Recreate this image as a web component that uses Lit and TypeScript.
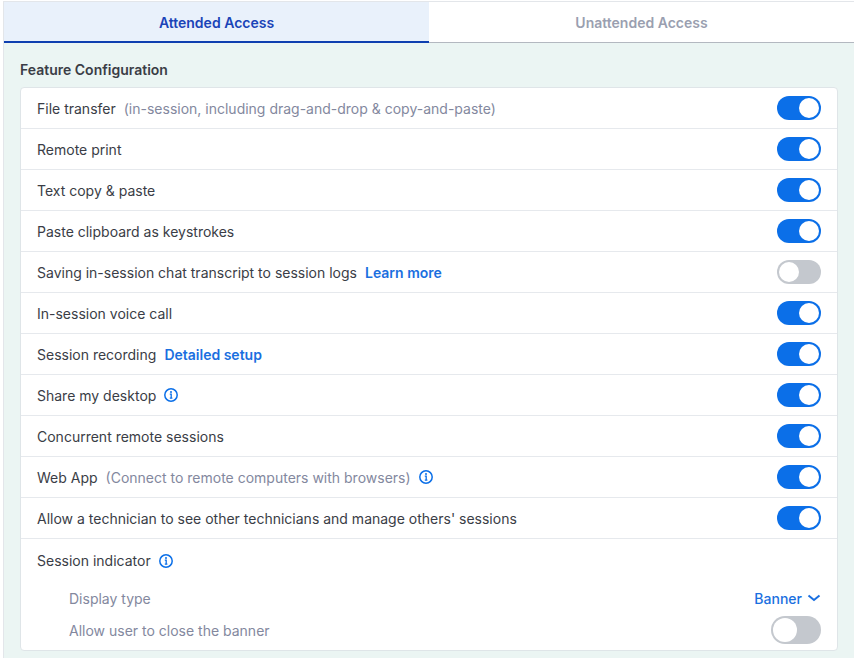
import { LitElement, html, css, svg } from "lit";
import { customElement } from "lit/decorators.js";

const info = html`<svg class="info" width="16" height="16" viewBox="0 0 16 16" fill="none">
  <circle cx="8" cy="8" r="6.2" stroke="#0b6fe8" stroke-width="1.5"/>
  <circle cx="8" cy="5" r="1" fill="#0b6fe8"/>
  <path d="M6.8 7.2H8.2V11M6.8 11.1H9.4" stroke="#0b6fe8" stroke-width="1.3"/>
</svg>`;

const toggle = (on: boolean, cls = "") => html`<span class="toggle ${on ? "on" : ""} ${cls}"><span class="knob"></span></span>`;

@customElement("app-root")
export class AppRoot extends LitElement {
  static styles = css`
    :host { display: block; height: 658px; overflow: hidden; background: #fff; padding: 1px 0 0 3px; box-sizing: border-box;
      font-family: Inter, "Liberation Sans", sans-serif; font-size: 14px; color: #3a3d46; }
    .frame { border-left: 1px solid #e3e6ea; border-top: 1px solid #e3e6ea; height: 100%; box-sizing: border-box; display: flex; flex-direction: column; background: #ebf5f3; }
    .tabs { display: flex; height: 41px; flex: none; }
    .tab { flex: 1; display: flex; align-items: center; justify-content: center; font-weight: 600; font-size: 14px; box-sizing: border-box; padding-top: 1px; }
    .tab.active { background: #e9f1fb; color: #1a44b8; border-bottom: 2px solid #0e3fb0; }
    .tab.inactive { background: #fff; color: #9a9fb0; border-bottom: 1px solid #b3b8c0; padding-top: 0; }
    .content { padding: 0 16px 0 16px; }
    h2 { margin: 0; font-size: 14px; font-weight: 600; color: #3a3d46; line-height: 17px; padding: 18px 0 9px; }
    .card { background: #fff; border: 1px solid #dfe5e8; border-radius: 4px; }
    .row { height: 41px; box-sizing: border-box; display: flex; align-items: center; padding: 0 16px; border-bottom: 1px solid #e6e9ed; }
    .row .spacer { flex: 1; }
    .hint { color: #83889e; margin-left: 8px; }
    a { color: #1a6fe0; font-weight: 600; margin-left: 8px; text-decoration: none; }
    .info { margin-left: 7px; flex: none; }
    .toggle { width: 44px; height: 24px; border-radius: 12px; background: #c4c8ce; position: relative; display: block; flex: none; }
    .toggle.on { background: #0b6fe8; }
    .knob { position: absolute; width: 20px; height: 20px; border-radius: 50%; background: #fff; top: 2px; left: 2px; }
    .toggle.on .knob { left: 22px; }
    .toggle.big { width: 50px; height: 28px; border-radius: 14px; }
    .toggle.big .knob { width: 24px; height: 24px; }
    .indicator { padding: 0 16px 11px; height: 111px; box-sizing: border-box; }
    .indicator .title { display: flex; align-items: center; height: 43px; }
    .sub { display: flex; align-items: center; justify-content: space-between; padding-left: 32px; color: #83889e; height: 32px; }
    .banner { color: #1a6fe0; font-weight: 500; display: flex; align-items: center; gap: 5px; }
  `;

  render() {
    const rows: [unknown, boolean][] = [
      [html`File transfer<span class="hint">(in-session, including drag-and-drop &amp; copy-and-paste)</span>`, true],
      ["Remote print", true],
      ["Text copy & paste", true],
      ["Paste clipboard as keystrokes", true],
      [html`Saving in-session chat transcript to session logs<a>Learn more</a>`, false],
      ["In-session voice call", true],
      [html`Session recording<a>Detailed setup</a>`, true],
      [html`Share my desktop${info}`, true],
      ["Concurrent remote sessions", true],
      [html`Web App<span class="hint">(Connect to remote computers with browsers)</span>${info}`, true],
      ["Allow a technician to see other technicians and manage others' sessions", true],
    ];
    return html`<div class="frame">
      <div class="tabs">
        <div class="tab active">Attended Access</div>
        <div class="tab inactive">Unattended Access</div>
      </div>
      <div class="content">
        <h2>Feature Configuration</h2>
        <div class="card">
          ${rows.map(([t, on]) => html`<div class="row"><span style="display:contents">${t}</span><span class="spacer"></span>${toggle(on)}</div>`)}
          <div class="indicator">
            <div class="title">Session indicator${info}</div>
            <div class="sub">Display type
              <span class="banner">Banner
                <svg width="14" height="8" viewBox="0 0 14 8" fill="none"><path d="M1.5 1.5L7 6l5.500-4.500" stroke="#1a6fe0" stroke-width="2"/></svg>
              </span>
            </div>
            <div class="sub">Allow user to close the banner ${toggle(false, "big")}</div>
          </div>
        </div>
      </div>
    </div>`;
  }
}
